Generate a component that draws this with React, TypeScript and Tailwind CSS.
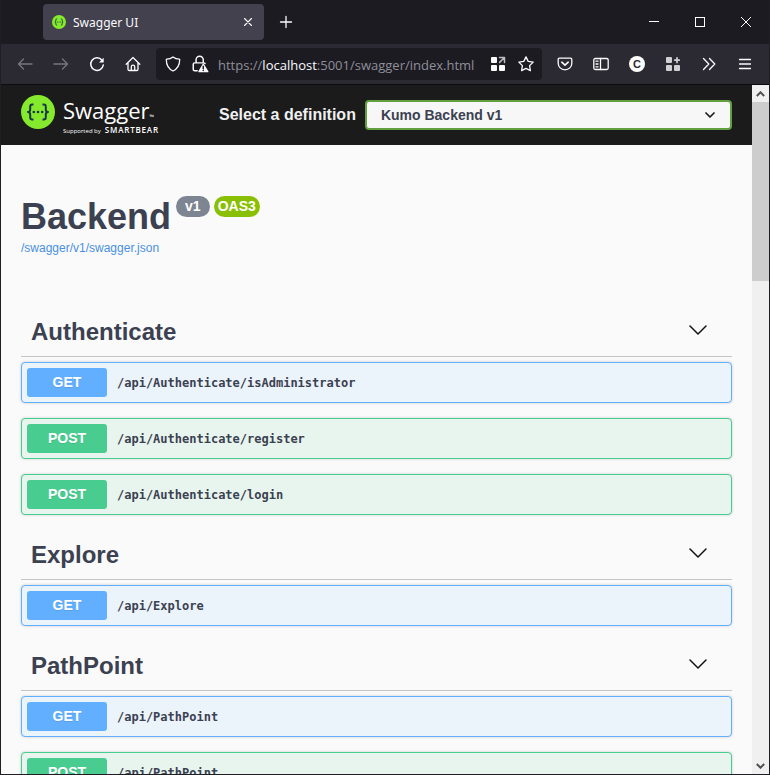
import React from "react";

type Method = "GET" | "POST";
type Operation = { method: Method; path: string };
type Section = { name: string; operations: Operation[] };

const sections: Section[] = [
  {
    name: "Authenticate",
    operations: [
      { method: "GET", path: "/api/Authenticate/isAdministrator" },
      { method: "POST", path: "/api/Authenticate/register" },
      { method: "POST", path: "/api/Authenticate/login" },
    ],
  },
  { name: "Explore", operations: [{ method: "GET", path: "/api/Explore" }] },
  {
    name: "PathPoint",
    operations: [
      { method: "GET", path: "/api/PathPoint" },
      { method: "POST", path: "/api/PathPoint" },
    ],
  },
];

const methodStyles: Record<Method, { row: string; badge: string }> = {
  GET: { row: "border-[#61affe] bg-[#ebf3fb]", badge: "bg-[#61affe]" },
  POST: { row: "border-[#49cc90] bg-[#e8f5ee]", badge: "bg-[#49cc90]" },
};

function Icon({ size = 16, children, className = "" }: { size?: number; children: React.ReactNode; className?: string }) {
  return (
    <svg
      width={size}
      height={size}
      viewBox="0 0 16 16"
      fill="none"
      stroke="currentColor"
      strokeWidth="1.3"
      strokeLinecap="round"
      strokeLinejoin="round"
      className={`shrink-0 ${className}`}
      aria-hidden="true"
    >
      {children}
    </svg>
  );
}

function ToolButton({ label, dim, children }: { label: string; dim?: boolean; children: React.ReactNode }) {
  return (
    <button
      type="button"
      aria-label={label}
      className={`flex h-8 w-9 shrink-0 items-center justify-center ${dim ? "text-[#77767e]" : "text-[#fbfbfe]"}`}
    >
      {children}
    </button>
  );
}

function SwaggerMark({ size }: { size: number }) {
  return (
    <svg width={size} height={size} viewBox="0 0 34 34" className="shrink-0" aria-hidden="true">
      <circle cx="17" cy="17" r="17" fill="#85ea2d" />
      <g fill="none" stroke="#173647" strokeWidth="2" strokeLinejoin="round">
        <path d="M12.5 9.5h-1.2c-1.5 0-2.1.8-2.1 2.3v2.6c0 1.6-.7 2.5-2.2 2.6 1.5.1 2.2 1 2.2 2.6v2.6c0 1.5.6 2.3 2.1 2.3h1.2" />
        <path d="M21.5 9.5h1.2c1.5 0 2.1.8 2.1 2.3v2.6c0 1.6.7 2.5 2.2 2.6-1.5.1-2.2 1-2.2 2.6v2.6c0 1.5-.6 2.3-2.1 2.3h-1.2" />
      </g>
      <g fill="#173647">
        <circle cx="12.8" cy="17" r="1.3" />
        <circle cx="17" cy="17" r="1.3" />
        <circle cx="21.2" cy="17" r="1.3" />
      </g>
    </svg>
  );
}

function TitleBar() {
  return (
    <div className="flex h-11 shrink-0 items-center bg-[#1c1b22] pl-[42px] text-[#fbfbfe]">
      <div className="flex h-9 w-[221px] items-center rounded bg-[#42414d] pl-[9px] pr-2">
        <SwaggerMark size={14} />
        <span className="flex-1 pt-px pl-[7px] font-['Noto_Sans','Open_Sans',sans-serif] text-xs">Swagger UI</span>
        <button type="button" aria-label="Close tab" className="flex size-4 items-center justify-center">
          <Icon size={14}>
            <path d="m4 4 8 8M12 4l-8 8" />
          </Icon>
        </button>
      </div>
      <button type="button" aria-label="New tab" className="flex h-9 w-11 items-center justify-center">
        <Icon>
          <path d="M8 2.5v11M2.500 8h11" />
        </Icon>
      </button>
      <div className="ml-auto flex">
        <button type="button" aria-label="Minimize" className="flex h-11 w-[46px] items-center justify-center">
          <svg width="10" height="10" shapeRendering="crispEdges"><path d="M0 4h10v1H0z" fill="#fff" /></svg>
        </button>
        <button type="button" aria-label="Maximize" className="flex h-11 w-[46px] items-center justify-center">
          <svg width="10" height="10"><rect x=".5" y=".5" width="9" height="9" fill="none" stroke="#fff" /></svg>
        </button>
        <button type="button" aria-label="Close window" className="flex h-11 w-[46px] items-center justify-center">
          <svg width="10" height="10"><path d="m0 0 10 10M10 0 0 10" stroke="#fff" /></svg>
        </button>
      </div>
    </div>
  );
}

function NavBar() {
  return (
    <div className="flex h-10 shrink-0 items-center bg-[#2b2a33] px-[6px]">
      <ToolButton label="Back" dim>
        <Icon><path d="M15 8H1.500M6.500 3 1.500 8l5 5" /></Icon>
      </ToolButton>
      <ToolButton label="Forward" dim>
        <Icon><path d="M1 8h13.500M9.500 3l5 5-5 5" /></Icon>
      </ToolButton>
      <ToolButton label="Reload">
        <Icon>
          <path d="M13 4.200A6.300 6.300 0 1 0 14.300 9" strokeWidth="1.500" />
          <path d="M14.700 1.800v4.700H10z" fill="currentColor" stroke="none" />
        </Icon>
      </ToolButton>
      <ToolButton label="Home">
        <Icon>
          <path d="M1.200 8.200 8 1.500l6.800 6.700M3 7v6.200c0 .8.5 1.300 1.300 1.300h7.400c.8 0 1.300-.5 1.300-1.300V7" />
          <path d="M6.300 14.300v-3.500c0-1 .7-1.600 1.700-1.600s1.700.6 1.700 1.600v3.500" />
        </Icon>
      </ToolButton>

      <div className="mx-[5px] flex h-8 min-w-0 flex-1 items-center rounded bg-[#1c1b22] pl-[3px] pr-[2px] text-[#fbfbfe]">
        <button type="button" aria-label="Tracking protection" className="flex h-8 w-[27px] shrink-0 items-center justify-center">
          <Icon>
            <path d="M8 1c1.800 1.400 4 2.100 6.400 2.200.2 0 .3.2.3.4C14.700 9 12.500 13 8 15 3.500 13 1.300 9 1.300 3.600c0-.2.1-.4.3-.4C4 3.100 6.200 2.400 8 1z" />
          </Icon>
        </button>
        <button type="button" aria-label="Connection not secure" className="flex h-8 w-[27px] shrink-0 items-center justify-center">
          <Icon size={18}>
            <path d="M4.500 7V4.300a3.200 3.200 0 0 1 6.400 0V7M5.500 14H3.300c-.8 0-1.300-.5-1.300-1.300V8.300C2 7.500 2.500 7 3.300 7h8c.5 0 1 .2 1.200.6" />
            <path d="M10.900 8 7 14.800h8z" fill="currentColor" stroke="currentColor" strokeWidth="1" />
            <path d="M10.900 10v2.200M10.900 13.700v.1" stroke="#1c1b22" />
          </Icon>
        </button>
        <div className="min-w-0 flex-1 pt-px pl-[5px] font-['Open_Sans','Noto_Sans',sans-serif] text-[13px] leading-5 whitespace-nowrap text-[#8f8f98]">
          https://<span className="text-[#fbfbfe]">localhost</span>:5001/swagger/index.html
        </div>
        <button type="button" aria-label="Open apps" className="flex h-8 w-7 shrink-0 items-center justify-center">
          <Icon>
            <g fill="currentColor" stroke="none">
              <rect x="1" y="1" width="6" height="6" rx="1" />
              <rect x="1" y="9" width="6" height="6" rx="1" />
              <rect x="9" y="9" width="6" height="6" rx="1" />
            </g>
            <path d="M9.500 1.600h5v5M14 2 9.600 6.400" stroke="#bdbdc2" strokeWidth="1.500" />
          </Icon>
        </button>
        <button type="button" aria-label="Bookmark this page" className="flex h-8 w-7 shrink-0 items-center justify-center">
          <Icon>
            <path d="m8 .9 2.200 4.500 5 .7-3.600 3.500.8 5L8 12.300l-4.400 2.300.8-5L.8 6.100l5-.7z" />
          </Icon>
        </button>
      </div>

      <ToolButton label="Save to Pocket">
        <Icon>
          <path d="M2.500 2.200h11c.8 0 1.300.5 1.300 1.300v3.700c0 3.700-2.900 6.600-6.800 6.600S1.200 10.900 1.200 7.200V3.500c0-.8.5-1.300 1.300-1.300z" />
          <path d="m4.800 6.200 3.200 3 3.200-3" strokeWidth="1.600" />
        </Icon>
      </ToolButton>
      <ToolButton label="Sidebars">
        <Icon>
          <rect x=".8" y="2.500" width="14.400" height="11" rx="1.500" />
          <path d="M7.500 2.500v11M3 5.200h2M3 8h2M3 10.800h2" />
        </Icon>
      </ToolButton>
      <ToolButton label="Account">
        <span className="flex size-4 items-center justify-center rounded-full bg-white font-['Liberation_Sans',Arial,sans-serif] text-[11px] leading-4 font-bold text-[#2b2a33]">
          C
        </span>
      </ToolButton>
      <ToolButton label="Extensions">
        <Icon className="text-[#cfcfd4]">
          <g fill="currentColor" stroke="none">
            <rect x="1" y="1" width="6" height="6" rx="1" />
            <rect x="1" y="9" width="6" height="6" rx="1" />
            <rect x="9" y="9" width="6" height="6" rx="1" />
          </g>
          <path d="M12 1.800v4.600M9.700 4.100h4.600" strokeWidth="1.700" />
        </Icon>
      </ToolButton>
      <ToolButton label="More tools">
        <Icon><path d="m2.500 2.500 5.300 5.500-5.300 5.500M8.500 2.500l5.300 5.500-5.300 5.500" /></Icon>
      </ToolButton>
      <ToolButton label="Application menu">
        <Icon><path d="M2.500 3.500h11M2.500 8h11M2.500 12.500h11" /></Icon>
      </ToolButton>
    </div>
  );
}

function TopBar() {
  return (
    <header className="flex h-[60px] items-center bg-[#1b1b1b] px-5">
      <a href="#home" className="flex w-[198px] shrink-0 items-start text-white" aria-label="Swagger, supported by SmartBear">
        <SwaggerMark size={34} />
        <span className="pl-2 font-['Open_Sans','Noto_Sans',sans-serif]">
          <span className="flex items-end text-[22px] leading-[30px]">
            Swagger<span className="text-[6px] leading-4">™</span>
          </span>
          <span className="flex items-baseline gap-1 text-[6px] leading-[10px]">
            Supported by <strong className="text-[8px] leading-[10px] font-semibold tracking-widest">SMARTBEAR</strong>
          </span>
        </span>
      </a>
      <label htmlFor="definition" className="shrink-0 pr-[9px] text-base font-bold text-[#f0f0f0]">
        Select a definition
      </label>
      <div className="relative min-w-0 flex-1">
        <select
          id="definition"
          className="block h-[30px] w-full appearance-none rounded border-2 border-[#62a03f] bg-[#f7f7f7] pr-10 pl-3.5 text-sm font-bold text-[#3b4151]"
        >
          <option>Kumo Backend v1</option>
        </select>
        <svg width="10" height="6" viewBox="0 0 10 6" className="pointer-events-none absolute top-3 right-[17px]" aria-hidden="true">
          <path d="m1 1 4 4 4-4" fill="none" stroke="#1b1b1b" strokeWidth="1.700" strokeLinecap="round" strokeLinejoin="round" />
        </svg>
      </div>
    </header>
  );
}

function OperationRow({ method, path }: Operation) {
  const style = methodStyles[method];
  return (
    <button
      type="button"
      className={`flex h-[41px] w-full items-center gap-2.5 rounded border px-[5px] text-left shadow-[0_0_3px_rgba(0,0,0,0.19)] ${style.row}`}
    >
      <span
        className={`w-20 rounded-[3px] text-center text-sm leading-[29px] font-bold text-white [text-shadow:0_1px_0_rgba(0,0,0,0.1)] ${style.badge}`}
      >
        {method}
      </span>
      <span className="font-['DejaVu_Sans_Mono',monospace] text-xs font-bold text-[#3b4151]">{path}</span>
    </button>
  );
}

function SectionBlock({ name, operations }: Section) {
  return (
    <section>
      <h2 className="mb-[5px] border-b border-[#c4c5c9]">
        <button type="button" className="flex h-[49px] w-full items-center justify-between pr-[25px] pl-2.5 text-2xl font-bold">
          {name}
          <svg width="18" height="10" viewBox="0 0 18 10" className="mb-1" aria-hidden="true">
            <path d="m1 1 8 8 8-8" fill="none" stroke="#111" strokeWidth="1.500" strokeLinecap="round" strokeLinejoin="round" />
          </svg>
        </button>
      </h2>
      <div className="flex flex-col gap-[15px] pb-[15px]">
        {operations.map((op) => (
          <OperationRow key={op.method + op.path} {...op} />
        ))}
      </div>
    </section>
  );
}

function ScrollBar() {
  return (
    <div className="flex w-[17px] shrink-0 flex-col bg-[#f0f0f0] text-[#505050]" aria-hidden="true">
      <div className="flex h-[17px] items-center justify-center">
        <svg width="9" height="6" viewBox="0 0 9 6"><path d="m.8 5 3.700-3.700L8.200 5" fill="none" stroke="currentColor" strokeWidth="2" /></svg>
      </div>
      <div className="h-[179px] bg-[#cdcdcd]" />
      <div className="mt-auto flex h-[17px] items-center justify-center">
        <svg width="9" height="6" viewBox="0 0 9 6"><path d="m.8 1 3.700 3.700L8.200 1" fill="none" stroke="currentColor" strokeWidth="2" /></svg>
      </div>
    </div>
  );
}

export default function App() {
  return (
    <div className="flex h-screen flex-col overflow-hidden border-x border-b border-[#1f1e24] bg-[#1f1e24] font-['Liberation_Sans',Arial,sans-serif] text-[#3b4151]">
      <TitleBar />
      <NavBar />
      <div className="flex min-h-0 flex-1 border-t border-[#0c0c0d]">
        <div className="min-w-0 flex-1 overflow-hidden bg-[#fafafa]">
          <TopBar />
          <main className="px-5 pt-[50px]">
            <div className="flex items-start">
              <h1 className="text-4xl leading-[44px] font-bold">Backend</h1>
              <span className="mt-px ml-[5px] rounded-full bg-[#7d8492] px-[9px] text-sm leading-[21px] font-bold text-white">v1</span>
              <span className="mt-px ml-1 rounded-full bg-[#89bf04] px-1 text-sm leading-[21px] font-bold text-white">OAS3</span>
            </div>
            <a href="#swagger.json" className="mb-[50px] block w-fit text-xs leading-[18px] text-[#4990e2]">
              /swagger/v1/swagger.json
            </a>
            {sections.map((section) => (
              <SectionBlock key={section.name} {...section} />
            ))}
          </main>
        </div>
        <ScrollBar />
      </div>
    </div>
  );
}
